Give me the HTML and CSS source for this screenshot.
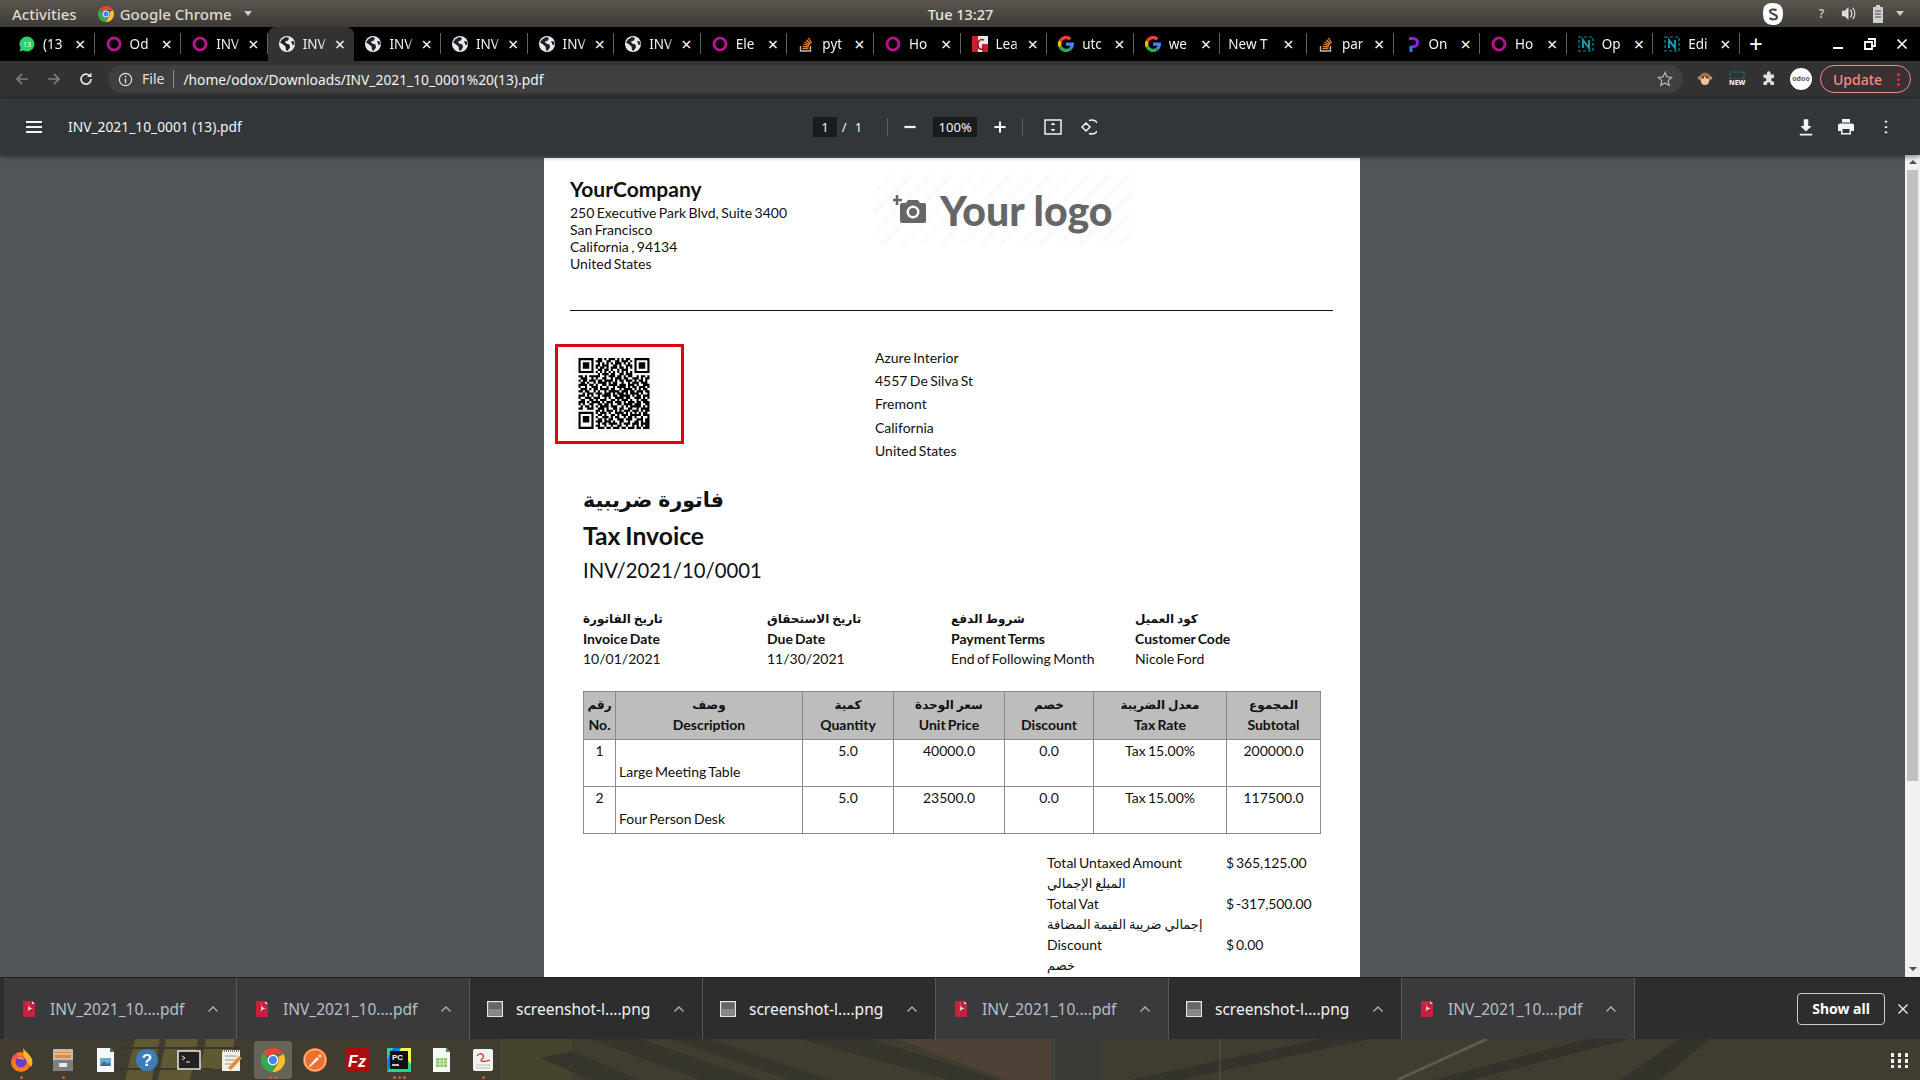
FILE: index.html
```html
<!DOCTYPE html>
<html lang="en">
  <head>
    <meta charset="utf-8">
    <title>INV_2021_10_0001 (13).pdf</title>
    <link rel="stylesheet" href="styles.css">
  </head>
  <body>
    <!-- shared icons -->
    <svg class="sprite" width="0" height="0">
      <symbol id="i-odoo" viewBox="0 0 16 16"><circle cx="8" cy="8" r="6" fill="none" stroke="#b0168a" stroke-width="3"/></symbol>
      <symbol id="i-globe" viewBox="0 0 16 16"><circle cx="8" cy="8" r="8" fill="#e8eaed"/><path d="M3 3.500 7 1l3 1-1 2.500-3 1 1 2 3.500 1 .5 3-2.500 3.500-1.500-1-.5-3.500L3.500 8 1 6.500zM12 5l3 .5.5 3-2 .5z" fill="#202124"/></symbol>
      <symbol id="i-google" viewBox="0 0 16 16"><path d="M8 3.200a4.800 4.800 0 0 1 3.200 1.200l2.300-2.300A8 8 0 0 0 .9 4.300l2.700 2.100A4.800 4.800 0 0 1 8 3.200z" fill="#ea4335"/><path d="M.9 4.300a8 8 0 0 0 0 7.400l2.700-2.100a4.800 4.800 0 0 1 0-3.200z" fill="#fbbc05"/><path d="M.9 11.700a8 8 0 0 0 12.500 2.300l-2.600-2a4.800 4.800 0 0 1-7.200-2.400z" fill="#34a853"/><path d="M15.800 6.500H8v3.200h4.500a3.900 3.900 0 0 1-1.700 2.300l2.600 2c1.600-1.500 2.600-3.700 2.600-6.300 0-.4-.1-.8-.2-1.200z" fill="#4285f4"/></symbol>
      <symbol id="i-stack" viewBox="0 0 16 16"><path d="M2.500 10v5h10v-5" fill="none" stroke="#bcbbbb" stroke-width="1.400"/><path d="M4.500 12.500h6M4.700 10.300l6 .6M5.300 8l5.800 1.700M6.500 5.800l5.200 3M8.300 3.800l4.400 4.100M10.500 2l3 5" stroke="#f48024" stroke-width="1.300" fill="none"/></symbol>
      <symbol id="i-notion" viewBox="0 0 16 16"><rect x="1" y="1" width="14" height="14" fill="none" stroke="#0b8ea3" stroke-width="1.200" stroke-dasharray="3 2"/><path d="M5 12V4l6 8V4" fill="none" stroke="#12a5bb" stroke-width="1.800"/></symbol>
      <symbol id="i-pdf" viewBox="0 0 16 16"><path d="M2 0h9l3 3v13H2z" fill="#c5213f"/><path d="M11 0v3h3z" fill="#f3c6cd"/><path d="M7 1c-1 3 2 6 5 7-3-.5-5 .5-6.500 5.500C7 10 8 7 7 1z" fill="#f5e3e6"/></symbol>
      <symbol id="i-image" viewBox="0 0 16 16"><rect x=".7" y=".7" width="14.600" height="14.600" fill="#3f3f3f" stroke="#e4e4e4" stroke-width="1.400"/><path d="M2 2h12v12H2z" fill="#666"/><path d="M2 8h12v6H2z" fill="#888"/></symbol>
      <symbol id="i-caret" viewBox="0 0 12 8"><path d="M1.500 6.500 6 2l4.500 4.500" fill="none" stroke="currentColor" stroke-width="1.300"/></symbol>
      <symbol id="i-chrome" viewBox="0 0 16 16"><path d="M8 0a8 8 0 0 1 6.900 4H8a4 4 0 0 0-3.700 2.500L1.800 2.900A8 8 0 0 1 8 0z" fill="#ea4335"/><path d="M14.900 4A8 8 0 0 1 7.500 16l3.300-5.200A4 4 0 0 0 11.500 6z" fill="#fbc02d"/><path d="M1.800 2.900 5 8.500A3.500 3.500 0 0 0 9.500 11.500L7.500 16A8 8 0 0 1 1.800 2.900z" fill="#34a853"/><circle cx="8" cy="8" r="3.200" fill="#4285f4" stroke="#fff" stroke-width=".9"/></symbol>
    </svg>

    <div class="topbar">
      <div class="topbar-left">
        <span>Activities</span>
        <span class="app-menu"><svg class="icon-16"><use href="#i-chrome"/></svg>Google Chrome<i class="menu-caret"></i></span>
      </div>
      <div class="clock">Tue 13:27</div>
      <div class="tray">
        <svg class="tray-s" viewBox="0 0 22 24"><path d="M11 1c6 0 10 3 10 10 0 8-3 12-10 12S1 19 1 11 5 1 11 1z" fill="#fff"/><path d="M14.500 8.500C13 7 8 7 8 9.500s7 2.500 7 5.500-5.500 3-7.500 1" fill="none" stroke="#444" stroke-width="2"/></svg>
        <span class="tray-help">?</span>
        <svg class="tray-sound" viewBox="0 0 16 16"><path d="M1 5h3l4-4v14l-4-4H1z" fill="#ddd"/><path d="M10 4c2 2 2 6 0 8M12.500 2c3 3 3 9 0 12" fill="none" stroke="#ddd" stroke-width="1.300"/></svg>
        <svg class="tray-battery" viewBox="0 0 12 18"><path d="M4 0h4v2h3v16H1V2h3z" fill="#cfcfcf"/><path d="M3 6h6M3 9h6M3 12h6" stroke="#444" stroke-width="1.200"/></svg>
        <i class="menu-caret"></i>
      </div>
    </div>

    <div class="tabstrip">
      <div class="tab">
        <svg class="icon-16" viewBox="0 0 16 16"><path d="M8 .5a7.500 7.500 0 0 0-6.400 11.400L.5 15.500l3.700-1A7.500 7.500 0 1 0 8 .5z" fill="#25d366"/><text x="8" y="11" class="badge-text">13</text></svg>
        <span class="tab-title">(13</span><span class="tab-close">×</span>
      </div>
      <div class="tab"><svg class="icon-16"><use href="#i-odoo"/></svg><span class="tab-title">Od</span><span class="tab-close">×</span></div>
      <div class="tab"><svg class="icon-16"><use href="#i-odoo"/></svg><span class="tab-title">INV</span><span class="tab-close">×</span></div>
      <div class="tab tab-active"><svg class="icon-16"><use href="#i-globe"/></svg><span class="tab-title">INV</span><span class="tab-close">×</span></div>
      <div class="tab"><svg class="icon-16"><use href="#i-globe"/></svg><span class="tab-title">INV</span><span class="tab-close">×</span></div>
      <div class="tab"><svg class="icon-16"><use href="#i-globe"/></svg><span class="tab-title">INV</span><span class="tab-close">×</span></div>
      <div class="tab"><svg class="icon-16"><use href="#i-globe"/></svg><span class="tab-title">INV</span><span class="tab-close">×</span></div>
      <div class="tab"><svg class="icon-16"><use href="#i-globe"/></svg><span class="tab-title">INV</span><span class="tab-close">×</span></div>
      <div class="tab"><svg class="icon-16"><use href="#i-odoo"/></svg><span class="tab-title">Ele</span><span class="tab-close">×</span></div>
      <div class="tab"><svg class="icon-16"><use href="#i-stack"/></svg><span class="tab-title">pyt</span><span class="tab-close">×</span></div>
      <div class="tab"><svg class="icon-16"><use href="#i-odoo"/></svg><span class="tab-title">Ho</span><span class="tab-close">×</span></div>
      <div class="tab">
        <svg class="icon-16" viewBox="0 0 16 16"><rect width="16" height="16" fill="#e8e8e8"/><rect width="6" height="16" fill="#c8202c"/><rect x="10" y="8" width="6" height="8" fill="#c8202c"/><path d="M12 4C8 2 5 6 6 10s4 4 6 2" fill="none" stroke="#a0101c" stroke-width="1.500"/></svg>
        <span class="tab-title">Lea</span><span class="tab-close">×</span>
      </div>
      <div class="tab"><svg class="icon-16"><use href="#i-google"/></svg><span class="tab-title">utc</span><span class="tab-close">×</span></div>
      <div class="tab"><svg class="icon-16"><use href="#i-google"/></svg><span class="tab-title">we</span><span class="tab-close">×</span></div>
      <div class="tab tab-noicon"><span class="tab-title">New T</span><span class="tab-close">×</span></div>
      <div class="tab"><svg class="icon-16"><use href="#i-stack"/></svg><span class="tab-title">par</span><span class="tab-close">×</span></div>
      <div class="tab">
        <svg class="icon-16" viewBox="0 0 16 16"><path d="M4 2.500h4.500a4 4 0 0 1 0 8H7" fill="none" stroke="#8a1fe0" stroke-width="3"/><path d="M6 10v6" stroke="#2a7fe8" stroke-width="3"/></svg>
        <span class="tab-title">On</span><span class="tab-close">×</span>
      </div>
      <div class="tab"><svg class="icon-16"><use href="#i-odoo"/></svg><span class="tab-title">Ho</span><span class="tab-close">×</span></div>
      <div class="tab"><svg class="icon-16"><use href="#i-notion"/></svg><span class="tab-title">Op</span><span class="tab-close">×</span></div>
      <div class="tab"><svg class="icon-16"><use href="#i-notion"/></svg><span class="tab-title">Edi</span><span class="tab-close">×</span></div>
      <div class="tab-new">+</div>
      <div class="window-controls">
        <svg viewBox="0 0 12 12"><path d="M1 10h10" stroke="#fff" stroke-width="2"/></svg>
        <svg viewBox="0 0 12 12"><path d="M4 1h7v7H8M1 4h7v7H1z" fill="none" stroke="#fff" stroke-width="1.800"/></svg>
        <svg viewBox="0 0 12 12"><path d="m1.500 1.500 9 9m0-9-9 9" stroke="#fff" stroke-width="1.700"/></svg>
      </div>
    </div>

    <div class="addressbar">
      <svg class="nav-btn" viewBox="0 0 16 16"><path d="M14 8H3M8 3 3 8l5 5" fill="none" stroke="#7c7f83" stroke-width="1.700"/></svg>
      <svg class="nav-btn" viewBox="0 0 16 16"><path d="M2 8h11M8 3l5 5-5 5" fill="none" stroke="#7c7f83" stroke-width="1.700"/></svg>
      <svg class="nav-btn" viewBox="0 0 16 16"><path d="M13 8a5 5 0 1 1-1.500-3.500" fill="none" stroke="#dfe1e5" stroke-width="1.700"/><path d="M13.500 1.500v4.500H9z" fill="#dfe1e5"/></svg>
      <div class="omnibox">
        <svg class="omni-info" viewBox="0 0 16 16"><circle cx="8" cy="8" r="6.500" fill="none" stroke="#dfe1e5" stroke-width="1.300"/><path d="M8 7v5M8 4v1.500" stroke="#dfe1e5" stroke-width="1.500"/></svg>
        <span class="omni-scheme">File</span>
        <span class="omni-url">/home/odox/Downloads/INV_2021_10_0001%20(13).pdf</span>
        <svg class="omni-star" viewBox="0 0 16 16"><path d="m8 1.500 2 4.400 4.700.5-3.500 3.200 1 4.700L8 11.900l-4.200 2.400 1-4.700L1.300 6.400 6 5.900z" fill="none" stroke="#b5b8bc" stroke-width="1.200"/></svg>
      </div>
      <div class="extensions">
        <svg class="ext" viewBox="0 0 16 16"><circle cx="8" cy="7" r="5.500" fill="#a3704f"/><circle cx="2.500" cy="7" r="1.800" fill="#c48e6e"/><circle cx="13.500" cy="7" r="1.800" fill="#c48e6e"/><ellipse cx="8" cy="10" rx="4" ry="4" fill="#eac4a4"/><circle cx="6" cy="6.500" r="1" fill="#222"/><circle cx="10" cy="6.500" r="1" fill="#222"/></svg>
        <div class="ext ext-new"><svg viewBox="0 0 16 8"><rect x="1" y="1" width="14" height="7" fill="none" stroke="#0b8ea3" stroke-dasharray="2 1.500"/></svg><span>NEW</span></div>
        <svg class="ext" viewBox="0 0 16 16"><path d="M6 2a1.800 1.800 0 0 1 3.600 0V3.500H13v3.300h-.8a1.900 1.900 0 0 0 0 3.800h.8V14H9.500v-1a1.800 1.800 0 0 0-3.600 0v1H2.500v-3.500h1a1.900 1.900 0 0 0 0-3.800h-1V3.500H6z" fill="#dfe1e5"/></svg>
        <div class="avatar">odoo</div>
      </div>
      <div class="update-pill"><span>Update</span><i class="update-dots"></i></div>
    </div>

    <div class="pdf-toolbar">
      <div class="pdf-left">
        <svg class="hamburger" viewBox="0 0 16 12"><path d="M0 1h16M0 6h16M0 11h16" stroke="#f1f3f4" stroke-width="2"/></svg>
        <span class="pdf-name">INV_2021_10_0001 (13).pdf</span>
      </div>
      <div class="pdf-center">
        <span class="page-box">1</span>
        <span class="page-sep">/</span>
        <span class="page-total">1</span>
        <i class="pdf-divider divider-first"></i>
        <svg class="pdf-btn" viewBox="0 0 16 16"><path d="M3 8h10" stroke="#f1f3f4" stroke-width="2"/></svg>
        <span class="zoom-box">100%</span>
        <svg class="pdf-btn" viewBox="0 0 16 16"><path d="M3 8h10M8 3v10" stroke="#f1f3f4" stroke-width="1.800"/></svg>
        <i class="pdf-divider divider-last"></i>
        <svg class="pdf-btn" viewBox="0 0 18 18"><rect x="1" y="2" width="16" height="14" fill="none" stroke="#f1f3f4" stroke-width="1.500"/><path d="m6.500 7 2.500-2.500L11.500 7zM6.500 11 9 13.500 11.500 11z" fill="#f1f3f4"/></svg>
        <svg class="pdf-btn" viewBox="0 0 18 18"><path d="M7 5 11 9 7 13 3 9zM10 2.500a7 7 0 1 1 0 13" fill="none" stroke="#f1f3f4" stroke-width="1.500"/></svg>
      </div>
      <div class="pdf-right">
        <svg class="pdf-btn" viewBox="0 0 16 16"><path d="M6 1h4v6h3l-5 5-5-5h3zM2.500 14h11v1.500h-11z" fill="#f1f3f4"/></svg>
        <svg class="pdf-btn" viewBox="0 0 18 18"><path d="M5 1h8v3.500H5zM3 5.500h12a2 2 0 0 1 2 2V13h-3v3.500H4V13H1V7.500a2 2 0 0 1 2-2z" fill="#f1f3f4"/><path d="M5.500 11h7v4h-7z" fill="#323639"/></svg>
        <svg class="pdf-btn" viewBox="0 0 16 16"><path d="M8 2.500v1.500M8 7.300v1.500M8 12v1.500" stroke="#f1f3f4" stroke-width="2.200"/></svg>
      </div>
    </div>

    <div class="viewer">
      <div class="viewer-scroll">
        <div class="page">
          <div class="doc-header">
            <div class="company">
              <div class="company-name">YourCompany</div>
              <div>250 Executive Park Blvd, Suite 3400</div>
              <div>San Francisco</div>
              <div>California , 94134</div>
              <div>United States</div>
            </div>
            <div class="logo">
              <svg class="logo-camera" viewBox="0 0 34 30"><path d="M9 8h4l2-3h10l2 3h4a2 2 0 0 1 2 2v16a2 2 0 0 1-2 2H9a2 2 0 0 1-2-2V10a2 2 0 0 1 2-2z" fill="#666"/><circle cx="20" cy="17" r="6.500" fill="#fff"/><circle cx="20" cy="17" r="4" fill="#666"/><path d="M4 0v10M0 5h9" stroke="#666" stroke-width="2.600"/></svg>
              <span>Your logo</span>
            </div>
          </div>

          <div class="doc-parties">
            <div class="qr-wrap">
              <svg class="qr" viewBox="0 0 33 33"><path d="M0 .5h7M9 .5h2M12 .5h1M14 .5h3M18 .5h1M20 .5h1M22 .5h2M26 .5h7M0 1.500h1M6 1.500h1M8 1.500h3M13 1.500h2M17 1.500h2M20 1.500h3M24 1.500h1M26 1.500h1M32 1.500h1M0 2.500h1M2 2.500h3M6 2.500h1M9 2.500h1M11 2.500h1M13 2.500h1M15 2.500h1M17 2.500h3M21 2.500h1M23 2.500h1M26 2.500h1M28 2.500h3M32 2.500h1M0 3.500h1M2 3.500h3M6 3.500h1M8 3.500h2M11 3.500h3M16 3.500h2M19 3.500h1M22 3.500h3M26 3.500h1M28 3.500h3M32 3.500h1M0 4.500h1M2 4.500h3M6 4.500h1M8 4.500h1M10 4.500h2M13 4.500h1M15 4.500h3M19 4.500h2M22 4.500h1M24 4.500h1M26 4.500h1M28 4.500h3M32 4.500h1M0 5.500h1M6 5.500h1M9 5.500h2M12 5.500h2M15 5.500h1M18 5.500h1M20 5.500h3M26 5.500h1M32 5.500h1M0 6.500h7M8 6.500h1M10 6.500h1M12 6.500h1M14 6.500h1M16 6.500h1M18 6.500h1M20 6.500h1M22 6.500h1M24 6.500h1M26 6.500h7M9 7.500h1M11 7.500h3M15 7.500h2M19 7.500h2M22 7.500h3M0 8.500h2M3 8.500h1M5 8.500h2M7 8.500h3M12 8.500h1M14 8.500h3M18 8.500h2M21 8.500h1M23 8.500h2M27 8.500h1M29 8.500h2M32 8.500h1M1 9.500h3M6 9.500h1M8 9.500h1M11 9.500h2M15 9.500h1M17 9.500h3M21 9.500h2M25 9.500h3M29 9.500h1M31 9.500h2M0 10.500h1M2 10.500h2M5 10.500h3M9 10.500h2M12 10.500h4M17 10.500h1M19 10.500h2M22 10.500h3M26 10.500h1M28 10.500h2M31 10.500h1M1 11.500h2M4 11.500h1M7 11.500h1M9 11.500h4M14 11.500h1M16 11.500h2M20 11.500h1M23 11.500h1M25 11.500h3M29 11.500h3M0 12.500h4M5 12.500h2M8 12.500h1M11 12.500h2M14 12.500h4M19 12.500h3M23 12.500h3M27 12.500h1M30 12.500h3M0 13.500h1M3 13.500h1M6 13.500h3M10 13.500h1M13 13.500h1M16 13.500h1M18 13.500h4M23 13.500h1M25 13.500h2M28 13.500h3M32 13.500h1M1 14.500h3M5 14.500h1M7 14.500h2M10 14.500h4M15 14.500h2M19 14.500h1M21 14.500h4M26 14.500h1M28 14.500h1M30 14.500h2M0 15.500h2M3 15.500h2M7 15.500h1M9 15.500h1M12 15.500h1M14 15.500h5M20 15.500h3M24 15.500h2M27 15.500h3M31 15.500h2M2 16.500h1M4 16.500h3M8 16.500h3M12 16.500h3M16 16.500h1M18 16.500h3M22 16.500h1M24 16.500h4M29 16.500h1M32 16.500h1M0 17.500h3M4 17.500h1M6 17.500h1M9 17.500h1M11 17.500h4M16 17.500h2M19 17.500h5M25 17.500h1M27 17.500h2M30 17.500h3M0 18.500h1M3 18.500h3M7 18.500h3M12 18.500h1M14 18.500h1M17 18.500h4M22 18.500h2M26 18.500h3M30 18.500h1M32 18.500h1M1 19.500h2M5 19.500h2M8 19.500h1M10 19.500h3M15 19.500h2M18 19.500h1M20 19.500h3M24 19.500h1M27 19.500h1M29 19.500h3M0 20.500h3M4 20.500h1M6 20.500h4M11 20.500h1M13 20.500h3M17 20.500h3M21 20.500h1M23 20.500h3M27 20.500h2M30 20.500h3M0 21.500h1M2 21.500h1M5 21.500h2M9 21.500h2M12 21.500h2M15 21.500h1M18 21.500h2M21 21.500h4M26 21.500h3M31 21.500h2M1 22.500h1M3 22.500h2M6 22.500h1M8 22.500h1M10 22.500h4M15 22.500h3M20 22.500h1M22 22.500h1M24 22.500h5M30 22.500h1M32 22.500h1M0 23.500h2M4 23.500h3M9 23.500h3M13 23.500h1M16 23.500h2M19 23.500h2M23 23.500h2M27 23.500h1M29 23.500h4M8 24.500h2M11 24.500h1M13 24.500h3M17 24.500h1M19 24.500h1M21 24.500h3M25 24.500h3M29 24.500h1M31 24.500h2M0 25.500h7M8 25.500h1M10 25.500h3M14 25.500h1M17 25.500h4M22 25.500h1M24 25.500h1M26 25.500h1M28 25.500h1M30 25.500h2M0 26.500h1M6 26.500h1M9 26.500h2M12 26.500h1M15 26.500h2M18 26.500h1M20 26.500h3M24 26.500h5M30 26.500h3M0 27.500h1M2 27.500h3M6 27.500h1M8 27.500h1M11 27.500h3M15 27.500h1M17 27.500h2M21 27.500h1M23 27.500h2M26 27.500h1M29 27.500h1M32 27.500h1M0 28.500h1M2 28.500h3M6 28.500h1M9 28.500h2M12 28.500h1M14 28.500h2M18 28.500h3M22 28.500h3M27 28.500h3M31 28.500h2M0 29.500h1M2 29.500h3M6 29.500h1M8 29.500h3M12 29.500h3M16 29.500h1M19 29.500h2M23 29.500h1M26 29.500h2M29 29.500h1M31 29.500h2M0 30.500h1M6 30.500h1M9 30.500h1M11 30.500h2M14 30.500h4M19 30.500h1M21 30.500h3M25 30.500h3M29 30.500h4M0 31.500h1M6 31.500h1M8 31.500h2M12 31.500h1M15 31.500h1M18 31.500h2M22 31.500h1M25 31.500h1M27 31.500h1M29 31.500h1M31 31.500h2M0 32.500h7M9 32.500h3M13 32.500h2M16 32.500h3M20 32.500h2M23 32.500h3M27 32.500h2M30 32.500h3" stroke="#000" fill="none"/></svg>
            </div>
            <div class="customer">
              <div>Azure Interior</div>
              <div>4557 De Silva St</div>
              <div>Fremont</div>
              <div>California</div>
              <div>United States</div>
            </div>
          </div>

          <div class="doc-body">
            <div class="title-ar">فاتورة ضريبية</div>
            <div class="title-en">Tax Invoice</div>
            <div class="invoice-no">INV/2021/10/0001</div>

            <div class="info-row">
              <div class="info-col">
                <div class="ar">تاريخ الفاتورة</div>
                <div class="info-label">Invoice Date</div>
                <div>10/01/2021</div>
              </div>
              <div class="info-col">
                <div class="ar">تاريخ الاستحقاق</div>
                <div class="info-label">Due Date</div>
                <div>11/30/2021</div>
              </div>
              <div class="info-col">
                <div class="ar">شروط الدفع</div>
                <div class="info-label">Payment Terms</div>
                <div>End of Following Month</div>
              </div>
              <div class="info-col">
                <div class="ar">كود العميل</div>
                <div class="info-label">Customer Code</div>
                <div>Nicole Ford</div>
              </div>
            </div>

            <table class="lines">
              <colgroup>
                <col class="col-no"><col class="col-desc"><col class="col-qty"><col class="col-price">
                <col class="col-disc"><col class="col-tax"><col class="col-sub">
              </colgroup>
              <thead>
                <tr>
                  <th><div class="ar">رقم</div>No.</th>
                  <th><div class="ar">وصف</div>Description</th>
                  <th><div class="ar">كمية</div>Quantity</th>
                  <th><div class="ar">سعر الوحدة</div>Unit Price</th>
                  <th><div class="ar">خصم</div>Discount</th>
                  <th><div class="ar">معدل الضريبة</div>Tax Rate</th>
                  <th><div class="ar">المجموع</div>Subtotal</th>
                </tr>
              </thead>
              <tbody>
                <tr>
                  <td>1</td>
                  <td class="desc">Large Meeting Table</td>
                  <td>5.0</td><td>40000.0</td><td>0.0</td><td>Tax 15.00%</td><td>200000.0</td>
                </tr>
                <tr>
                  <td>2</td>
                  <td class="desc">Four Person Desk</td>
                  <td>5.0</td><td>23500.0</td><td>0.0</td><td>Tax 15.00%</td><td>117500.0</td>
                </tr>
              </tbody>
            </table>

            <div class="totals">
              <div>Total Untaxed Amount</div><div class="amount">$ 365,125.00</div>
              <div class="total-ar">المبلغ الإجمالي</div><div></div>
              <div>Total Vat</div><div class="amount">$ -317,500.00</div>
              <div class="total-ar">إجمالي ضريبة القيمة المضافة</div><div></div>
              <div>Discount</div><div class="amount">$ 0.00</div>
              <div class="total-ar">خصم</div><div></div>
            </div>
          </div>
        </div>
      </div>
      <div class="scrollbar">
        <i class="scroll-up"></i>
        <div class="scroll-track"><div class="scroll-thumb"></div></div>
        <i class="scroll-down"></i>
      </div>
    </div>

    <div class="downloads">
      <div class="dl-items">
        <div class="dl dl-pdf"><svg class="icon-16"><use href="#i-pdf"/></svg><span class="dl-name">INV_2021_10....pdf</span><svg class="dl-caret"><use href="#i-caret"/></svg></div>
        <div class="dl dl-pdf"><svg class="icon-16"><use href="#i-pdf"/></svg><span class="dl-name">INV_2021_10....pdf</span><svg class="dl-caret"><use href="#i-caret"/></svg></div>
        <div class="dl"><svg class="icon-16"><use href="#i-image"/></svg><span class="dl-name">screenshot-l....png</span><svg class="dl-caret"><use href="#i-caret"/></svg></div>
        <div class="dl"><svg class="icon-16"><use href="#i-image"/></svg><span class="dl-name">screenshot-l....png</span><svg class="dl-caret"><use href="#i-caret"/></svg></div>
        <div class="dl dl-pdf"><svg class="icon-16"><use href="#i-pdf"/></svg><span class="dl-name">INV_2021_10....pdf</span><svg class="dl-caret"><use href="#i-caret"/></svg></div>
        <div class="dl"><svg class="icon-16"><use href="#i-image"/></svg><span class="dl-name">screenshot-l....png</span><svg class="dl-caret"><use href="#i-caret"/></svg></div>
        <div class="dl dl-pdf"><svg class="icon-16"><use href="#i-pdf"/></svg><span class="dl-name">INV_2021_10....pdf</span><svg class="dl-caret"><use href="#i-caret"/></svg></div>
      </div>
      <div class="show-all">Show all</div>
      <svg class="dl-close" viewBox="0 0 12 12"><path d="m1.500 1.500 9 9m0-9-9 9" stroke="#e8eaed" stroke-width="1.400"/></svg>
    </div>

    <div class="dock">
      <!-- wallpaper showing behind the dock -->
      <svg class="wallpaper" viewBox="0 0 1920 41" preserveAspectRatio="none">
        <path d="M135 0h25l-8 41h-27zM166 0h32l-8 41h-32zM206 0h29l-6 30h-29z" fill="#5e5833"/>
        <path d="M120 9h120M112 30h100" stroke="#39362a" stroke-width="2"/>
        <path d="M500 0h72v41h-72z" fill="#46442f"/>
        <path d="M572 12 640 41h-50l-50-22zM590 0h50l120 41h-60zM670 0h40l120 41h-40zM800 0h70l130 41h-50z" fill="#35352b"/>
        <path d="M898 0h154v41h-45z" fill="#4e4237"/>
        <path d="M1052 0h50v41h-50z" fill="#3a3a36"/>
        <path d="M1130 41 1320 0h50L1180 41zM1433 41 1587 0h43L1470 41zM1620 41 1680 0h30l-50 41z" fill="#33332b"/>
        <path d="M1487 0 1397 41" stroke="#5c5c48" stroke-width="3"/>
        <path d="M1054 0v41M1220 0v41" stroke="#55554c"/>
      </svg>
      <div class="dock-app dot-1">
        <svg viewBox="0 0 24 24"><circle cx="12" cy="14" r="10" fill="#ff7a1a"/><path d="M14 0c2 3 6 5 9 11 1 4 0 6-1 8L15 9z" fill="#ffb52e"/><path d="M2 14C3 9 5 6 8 5l2 4z" fill="#ff4f5e"/><circle cx="12" cy="14" r="5.500" fill="#6e3bd1"/><path d="M8 10c3-2 7-1 8 2-3-1-5 0-8-2z" fill="#ff9640"/></svg>
      </div>
      <div class="dock-app dot-1">
        <svg viewBox="0 0 24 24"><rect x="2" y="1" width="20" height="22" rx="1" fill="#bdbdbd"/><rect x="4" y="4" width="16" height="6" fill="#e98a33"/><path d="M4 6h16" stroke="#fbe1c0"/><rect x="2" y="12" width="20" height="11" fill="#7f7f7f"/><rect x="8" y="15" width="8" height="4" fill="#e8e8e8"/></svg>
      </div>
      <div class="dock-app">
        <svg viewBox="0 0 24 24"><path d="M4 0h13l4 4v20H4z" fill="#f6f8fa"/><path d="M17 0v4h4z" fill="#1d6aa8"/><rect x="7" y="10" width="11" height="8" fill="#6fa9cf"/><path d="m7 18 4-5 3 3 2-2 2 4z" fill="#3d6f95"/></svg>
      </div>
      <div class="dock-app">
        <svg viewBox="0 0 24 24"><circle cx="12" cy="12" r="11" fill="#3d7cb8"/><text x="12" y="18" class="dock-glyph">?</text></svg>
      </div>
      <div class="dock-app">
        <svg viewBox="0 0 24 24"><rect x="1" y="3" width="22" height="18" fill="#222" stroke="#e8e8e8" stroke-width="1.500"/><path d="m5 8 3 2-3 2M9 14h4" stroke="#eee" fill="none"/></svg>
      </div>
      <div class="dock-app">
        <svg viewBox="0 0 24 24"><rect x="3" y="2" width="18" height="21" fill="#f2efe6"/><path d="M3 3h18" stroke="#777" stroke-width="2" stroke-dasharray="1 1"/><path d="M6 8h12M6 12h12M6 16h8" stroke="#999"/><path d="m9 20 11-12 3 2-11 12z" fill="#e98a33"/></svg>
      </div>
      <div class="dock-app dock-active dot-2">
        <svg><use href="#i-chrome"/></svg>
      </div>
      <div class="dock-app">
        <svg viewBox="0 0 24 24"><circle cx="12" cy="12" r="12" fill="#f0702d"/><circle cx="12" cy="12" r="10.500" fill="none" stroke="#fbd7c2"/><path d="m6 18 8-9 2 2-9 8z" fill="#fff"/><path d="m15 8 2-2 2 2-2 2z" fill="#fbd7c2"/></svg>
      </div>
      <div class="dock-app">
        <svg viewBox="0 0 24 24"><rect x="0" y="0" width="24" height="24" fill="#a80e0e"/><text x="12" y="19" class="dock-fz">Fz</text></svg>
      </div>
      <div class="dock-app dot-3">
        <svg viewBox="0 0 24 24"><rect width="24" height="24" fill="#21d789"/><path d="M10 0h14v16z" fill="#fcf84a"/><path d="M0 12 6 0h8L0 24z" fill="#087cfa"/><rect x="3" y="3" width="18" height="18" fill="#111"/><text x="5" y="12" class="dock-pc">PC</text><path d="M5 17h7" stroke="#fff" stroke-width="1.500"/></svg>
      </div>
      <div class="dock-app">
        <svg viewBox="0 0 24 24"><path d="M4 0h13l4 4v20H4z" fill="#f6f8fa"/><path d="M17 0v4h4z" fill="#2a9d3b"/><path d="M7 10h11v9H7z" fill="#8cc665"/><path d="M7 13h11M7 16h11M11 10v9M14.500 10v9" stroke="#fff" stroke-width=".6"/></svg>
      </div>
      <div class="dock-app dot-1">
        <svg viewBox="0 0 24 24"><rect x="2" y="1" width="20" height="22" rx="2" fill="#f2f2f2"/><path d="M6 8c4-5 9 0 5 3s4 3 8 1" fill="none" stroke="#d22" stroke-width="1.200"/><path d="M5 17h14M5 20h14" stroke="#bbb"/></svg>
      </div>
      <svg class="dock-grid" viewBox="0 0 18 16"><path d="M1 1h3v4H1zM8 1h3v4H8zM15 1h3v4h-3zM1 7h3v4H1zM8 7h3v4H8zM15 7h3v4h-3zM1 13h3v3H1zM8 13h3v3H8zM15 13h3v3h-3z" fill="#f2f2f2"/></svg>
    </div>
  </body>
</html>
```

FILE: styles.css
```css
html, body {
  margin: 0;
  height: 100%;
}
body {
  width: 1920px;
  height: 1080px;
  overflow: hidden;
  display: flex;
  flex-direction: column;
  background: #3b3a2e;
  font-family: "Noto Sans", "DejaVu Sans", sans-serif;
  font-size: 14px;
  color: #e8eaed;
}
svg {
  display: block;
  flex: none;
}
.sprite {
  position: absolute;
}
.icon-16 {
  width: 16px;
  height: 16px;
}

/* gnome top bar */
.topbar {
  height: 27px;
  flex: none;
  display: grid;
  grid-template-columns: 1fr auto 1fr;
  align-items: center;
  padding: 0 16px 0 12px;
  background: linear-gradient(#5a564e, #3e3b36);
  color: #dcdad5;
  font-size: 15px;
  font-weight: 500;
}
.topbar-left {
  display: flex;
  gap: 21px;
}
.app-menu {
  display: flex;
  align-items: center;
  gap: 6px;
}
.menu-caret {
  width: 0;
  height: 0;
  margin-left: 6px;
  border: 4px solid transparent;
  border-top: 5px solid #cfcdc8;
  border-bottom: 0;
}
.clock {
  color: #e6e4df;
  font-size: 14.500px;
  margin-left: 5px;
}
.tray {
  display: flex;
  align-items: center;
  justify-content: flex-end;
}
.tray-s {
  width: 22px;
  height: 24px;
  margin-right: 35px;
}
.tray-help {
  font-size: 12px;
  margin-right: 17px;
}
.tray-sound {
  width: 15px;
  height: 15px;
  margin-right: 16px;
}
.tray-battery {
  width: 12px;
  height: 18px;
  margin-right: 6px;
}

/* chrome tabs */
.tabstrip {
  height: 34px;
  flex: none;
  display: flex;
  align-items: stretch;
  padding-left: 8px;
  background: #000;
}
.tab {
  position: relative;
  width: 86.600px;
  flex: none;
  display: flex;
  align-items: center;
  gap: 8px;
  padding-left: 11px;
  box-sizing: border-box;
  color: #f1f3f4;
  font-size: 13.500px;
}
.tab::after {
  content: "";
  position: absolute;
  right: 0;
  top: 6px;
  bottom: 7px;
  width: 1px;
  background: #5f6368;
}
.tab-active {
  background: #323232;
  border-radius: 8px 8px 0 0;
}
.tab-active::after {
  display: none;
}
.tab-title {
  width: 24px;
  flex: none;
  white-space: nowrap;
  -webkit-mask-image: linear-gradient(90deg, #000 75%, rgba(0, 0, 0, .35));
  mask-image: linear-gradient(90deg, #000 75%, rgba(0, 0, 0, .35));
}
.tab-noicon .tab-title {
  width: 52px;
}
.tab-close {
  font-size: 18px;
  line-height: 1;
  color: #fff;
}
.tab-noicon {
  gap: 3px;
  padding-left: 8px;
}
.tab-new {
  width: 18px;
  margin-left: 9px;
  color: #fff;
  font-size: 24px;
  line-height: 33px;
}
.window-controls {
  margin-left: auto;
  display: flex;
  align-items: center;
  gap: 20px;
  padding-right: 12px;
}
.window-controls svg {
  width: 12px;
  height: 12px;
}
.badge-text {
  fill: #fff;
  font-size: 7px;
  text-anchor: middle;
}

/* address bar */
.addressbar {
  height: 37px;
  flex: none;
  display: flex;
  align-items: center;
  padding-left: 14px;
  box-sizing: border-box;
  background: #323232;
  border-bottom: 1px solid #2a2a2a;
}
.nav-btn {
  width: 16px;
  height: 16px;
  margin-right: 16px;
}
.nav-btn + .omnibox {
  margin-left: -2px;
}
.omnibox {
  width: 1575px;
  height: 28px;
  display: flex;
  align-items: center;
  padding: 0 10px 0 10px;
  box-sizing: border-box;
  border-radius: 14px;
  background: #3f3f3f;
  font-size: 14px;
}
.omni-info {
  width: 15px;
  height: 15px;
  margin-right: 9px;
}
.omni-scheme {
  color: #dfe1e5;
  padding-right: 9px;
  margin-right: 9px;
  border-right: 1px solid #8a8d91;
  line-height: 18px;
}
.omni-url {
  flex: 1;
  font-size: 13.800px;
  color: #f1f3f4;
}
.omni-star {
  width: 16px;
  height: 16px;
}
.extensions {
  display: flex;
  align-items: center;
  gap: 16px;
  margin-left: 14px;
}
.ext {
  width: 16px;
  height: 16px;
  flex: none;
}
.ext-new {
  font-size: 7px;
  font-weight: 700;
  line-height: 8px;
  color: #fff;
  text-align: center;
}
.avatar {
  width: 22px;
  height: 22px;
  margin-left: -3px;
  border-radius: 50%;
  background: #fff;
  color: #5b5b5b;
  font-size: 7px;
  font-weight: 700;
  line-height: 22px;
  text-align: center;
}
.update-pill {
  width: 91px;
  height: 28px;
  margin-left: 8px;
  display: flex;
  align-items: center;
  justify-content: space-between;
  padding: 0 10px 0 12px;
  box-sizing: border-box;
  border: 1px solid #ee8a8a;
  border-radius: 14px;
  background: #3a3033;
  color: #f28b82;
  font-size: 14px;
  font-weight: 500;
}
.update-dots {
  width: 3px;
  height: 3px;
  border-radius: 50%;
  background: #e8313a;
  box-shadow: 0 -5px 0 #e8313a, 0 5px 0 #e8313a;
}

/* pdf toolbar */
.pdf-toolbar {
  height: 57px;
  flex: none;
  position: relative;
  display: grid;
  grid-template-columns: 1fr auto 1fr;
  align-items: center;
  background: #323639;
  box-shadow: 0 2px 5px rgba(0, 0, 0, .45);
  color: #f1f3f4;
}
.pdf-left {
  display: flex;
  align-items: center;
  gap: 26px;
  padding-left: 26px;
}
.hamburger {
  width: 16px;
  height: 12px;
}
.pdf-name {
  font-size: 13.800px;
}
.pdf-center {
  display: flex;
  align-items: center;
  margin-right: 10px;
  font-size: 13px;
}
.page-box {
  width: 24px;
  height: 20px;
  line-height: 20px;
  text-align: center;
  background: #191b1c;
}
.page-sep {
  margin: 0 8px 0 5px;
}
.pdf-divider {
  width: 1px;
  height: 18px;
  margin: 0 13px;
  background: #5a5e62;
}
.divider-first {
  margin-left: 25px;
}
.divider-last {
  margin-right: 21px;
}
.pdf-btn {
  width: 18px;
  height: 18px;
}
.zoom-box {
  width: 44px;
  height: 20px;
  margin: 0 14px;
  line-height: 20px;
  text-align: center;
  background: #191b1c;
}
.pdf-center .pdf-btn + .pdf-btn {
  margin-left: 17px;
}
.pdf-right {
  display: flex;
  justify-content: flex-end;
  gap: 22px;
  padding-right: 25px;
}

/* pdf viewer */
.viewer {
  flex: 1;
  min-height: 0;
  display: flex;
  background: #50565a;
  border-bottom: 1px solid #1f1f1f;
}
.viewer-scroll {
  flex: 1;
  overflow: hidden;
  display: flex;
  justify-content: center;
  padding: 3px 1px 0 0;
}
.scrollbar {
  width: 15px;
  flex: none;
  display: flex;
  flex-direction: column;
  background: #f1f1f1;
}
.scroll-up,
.scroll-down {
  height: 15px;
  flex: none;
  position: relative;
}
.scroll-up::after,
.scroll-down::after {
  content: "";
  position: absolute;
  left: 4px;
  top: 5px;
  border: 4px solid transparent;
  border-top: 0;
  border-bottom: 4px solid #505050;
}
.scroll-down::after {
  border-bottom: 0;
  border-top: 4px solid #505050;
}
.scroll-track {
  flex: 1;
  padding: 0 2px;
}
.scroll-thumb {
  height: 611px;
  background: #c1c1c1;
}

/* invoice page */
.page {
  width: 816px;
  height: 1056px;
  flex: none;
  box-sizing: border-box;
  padding: 19px 27px 0 26px;
  background: #fff;
  color: #111;
  font-family: Lato, "DejaVu Sans", sans-serif;
  font-size: 14px;
  line-height: 17px;
  word-spacing: -1.200px;
}
.doc-header {
  display: grid;
  grid-template-columns: 305px 1fr;
  height: 133px;
  border-bottom: 1px solid #111;
}
.company-name {
  font-size: 21px;
  font-weight: 700;
  line-height: 24px;
  margin-bottom: 3px;
}
.logo {
  width: 258px;
  height: 70px;
  display: flex;
  align-items: center;
  gap: 13px;
  padding-left: 18px;
  box-sizing: border-box;
  margin-top: -2px;
  background: repeating-linear-gradient(135deg, #fff 0 10px, #fafafa 10px 14px);
  color: #666;
  font-size: 41px;
  font-weight: 900;
  word-spacing: normal;
}
.logo-camera {
  width: 34px;
  height: 30px;
}
.doc-parties {
  display: grid;
  grid-template-columns: 305px 1fr;
  margin-top: 35px;
}
.qr-wrap {
  width: 87px;
  height: 83px;
  margin-top: 6px;
  display: flex;
  align-items: center;
  justify-content: center;
  background: #fcfcfc;
  position: relative;
}
/* red marker the screenshot author drew round the code */
.qr-wrap::after {
  content: "";
  position: absolute;
  left: -15px;
  top: -8px;
  width: 123px;
  height: 94px;
  border: 3px solid #e2000f;
}
.qr {
  width: 72px;
  height: 71px;
}
.customer {
  line-height: 23.200px;
}
.doc-body {
  padding: 0 0 0 13px;
}
.title-ar {
  margin-top: 23px;
  font-family: "DejaVu Sans", sans-serif;
  font-size: 20.500px;
  font-weight: 700;
  line-height: 30px;
}
.title-en {
  margin-top: 6px;
  font-size: 24.700px;
  font-weight: 700;
  line-height: 30px;
}
.invoice-no {
  margin-top: 4px;
  font-size: 20.300px;
  line-height: 30px;
}
.info-row {
  display: grid;
  grid-template-columns: repeat(4, 184px);
  margin-top: 24px;
}
.info-col > div {
  line-height: 20px;
}
.ar {
  font-family: "DejaVu Sans", sans-serif;
  font-size: 12px;
  font-weight: 700;
}
.info-label {
  font-weight: 700;
}
.lines {
  width: 737px;
  margin-top: 22px;
  table-layout: fixed;
  border-collapse: collapse;
}
.col-no { width: 32px; }
.col-desc { width: 187px; }
.col-qty { width: 91px; }
.col-price { width: 111px; }
.col-disc { width: 89px; }
.col-tax { width: 133px; }
.col-sub { width: 94px; }
.lines th,
.lines td {
  border: 1px solid #8a8a8a;
  text-align: center;
  vertical-align: top;
  padding: 0;
}
.lines th {
  height: 48px;
  background: #bdbdbd;
  font-weight: 700;
  line-height: 20px;
  padding-top: 3px;
  box-sizing: border-box;
}
.lines td {
  height: 47px;
  box-sizing: border-box;
  padding-top: 2px;
  line-height: 17px;
}
.lines td.desc {
  text-align: left;
  padding: 23px 0 0 3px;
}
.totals {
  display: grid;
  grid-template-columns: 179px 100px;
  margin: 19px 0 0 464px;
  line-height: 20.600px;
}
.amount {
  word-spacing: -1.500px;
  letter-spacing: -.1px;
}
.total-ar {
  font-family: "DejaVu Sans", sans-serif;
  font-size: 13px;
  white-space: nowrap;
}

/* download shelf */
.downloads {
  height: 61px;
  flex: none;
  display: flex;
  align-items: center;
  background: #2d2d2d;
  padding-left: 4px;
  box-sizing: border-box;
}
.dl-items {
  display: flex;
  height: 100%;
}
.dl {
  width: 233px;
  box-sizing: border-box;
  display: flex;
  align-items: center;
  gap: 13px;
  padding-left: 17px;
  border-right: 1px solid #55585c;
  color: #f1f3f4;
  font-size: 15.500px;
}
.dl-pdf {
  background: #3a3a3d;
  color: #b4c0c8;
}
.dl-name {
  width: 142px;
  white-space: nowrap;
}
.dl-caret {
  width: 12px;
  height: 8px;
  margin-left: 2px;
  color: #b0b3b6;
}
.show-all {
  width: 88px;
  height: 32px;
  margin-left: 162px;
  box-sizing: border-box;
  border: 1px solid #c9cbcd;
  border-radius: 4px;
  color: #fff;
  font-size: 14px;
  font-weight: 700;
  line-height: 29px;
  text-align: center;
}
.dl-close {
  width: 12px;
  height: 12px;
  margin-left: 12px;
}

/* ubuntu dock, over the wallpaper */
.dock {
  height: 41px;
  flex: none;
  position: relative;
  display: flex;
  align-items: center;
  padding-left: 2px;
  background: #403c2f;
}
.wallpaper {
  position: absolute;
  left: 0;
  top: 0;
  width: 100%;
  height: 100%;
}
.dock-app {
  position: relative;
  width: 38px;
  height: 38px;
  margin-right: 4px;
  flex: none;
  display: flex;
  align-items: center;
  justify-content: center;
  border-radius: 3px;
}
.dock-app svg {
  width: 24px;
  height: 24px;
}
.dock-active {
  background: rgba(255, 255, 255, .2);
}
.dot-1::after,
.dot-2::after,
.dot-3::after {
  content: "";
  position: absolute;
  left: 50%;
  bottom: 0;
  width: 3px;
  height: 3px;
  margin-left: -1.500px;
  border-radius: 50%;
  background: #e95420;
}
.dot-2::after {
  margin-left: -4px;
  box-shadow: 5px 0 #e95420;
}
.dot-3::after {
  box-shadow: -5px 0 #e95420, 5px 0 #e95420;
}
.dock-glyph {
  fill: #fff;
  font-family: "Liberation Sans", sans-serif;
  font-size: 17px;
  font-weight: 700;
  text-anchor: middle;
}
.dock-fz {
  fill: #fff;
  font-family: "Liberation Sans", sans-serif;
  font-size: 16px;
  font-weight: 700;
  font-style: italic;
  text-anchor: middle;
}
.dock-pc {
  fill: #fff;
  font-family: "Liberation Sans", sans-serif;
  font-size: 8px;
  font-weight: 700;
}
.dock-grid {
  position: relative;
  margin-left: auto;
  margin-right: 12px;
  width: 18px;
  height: 16px;
}
```
